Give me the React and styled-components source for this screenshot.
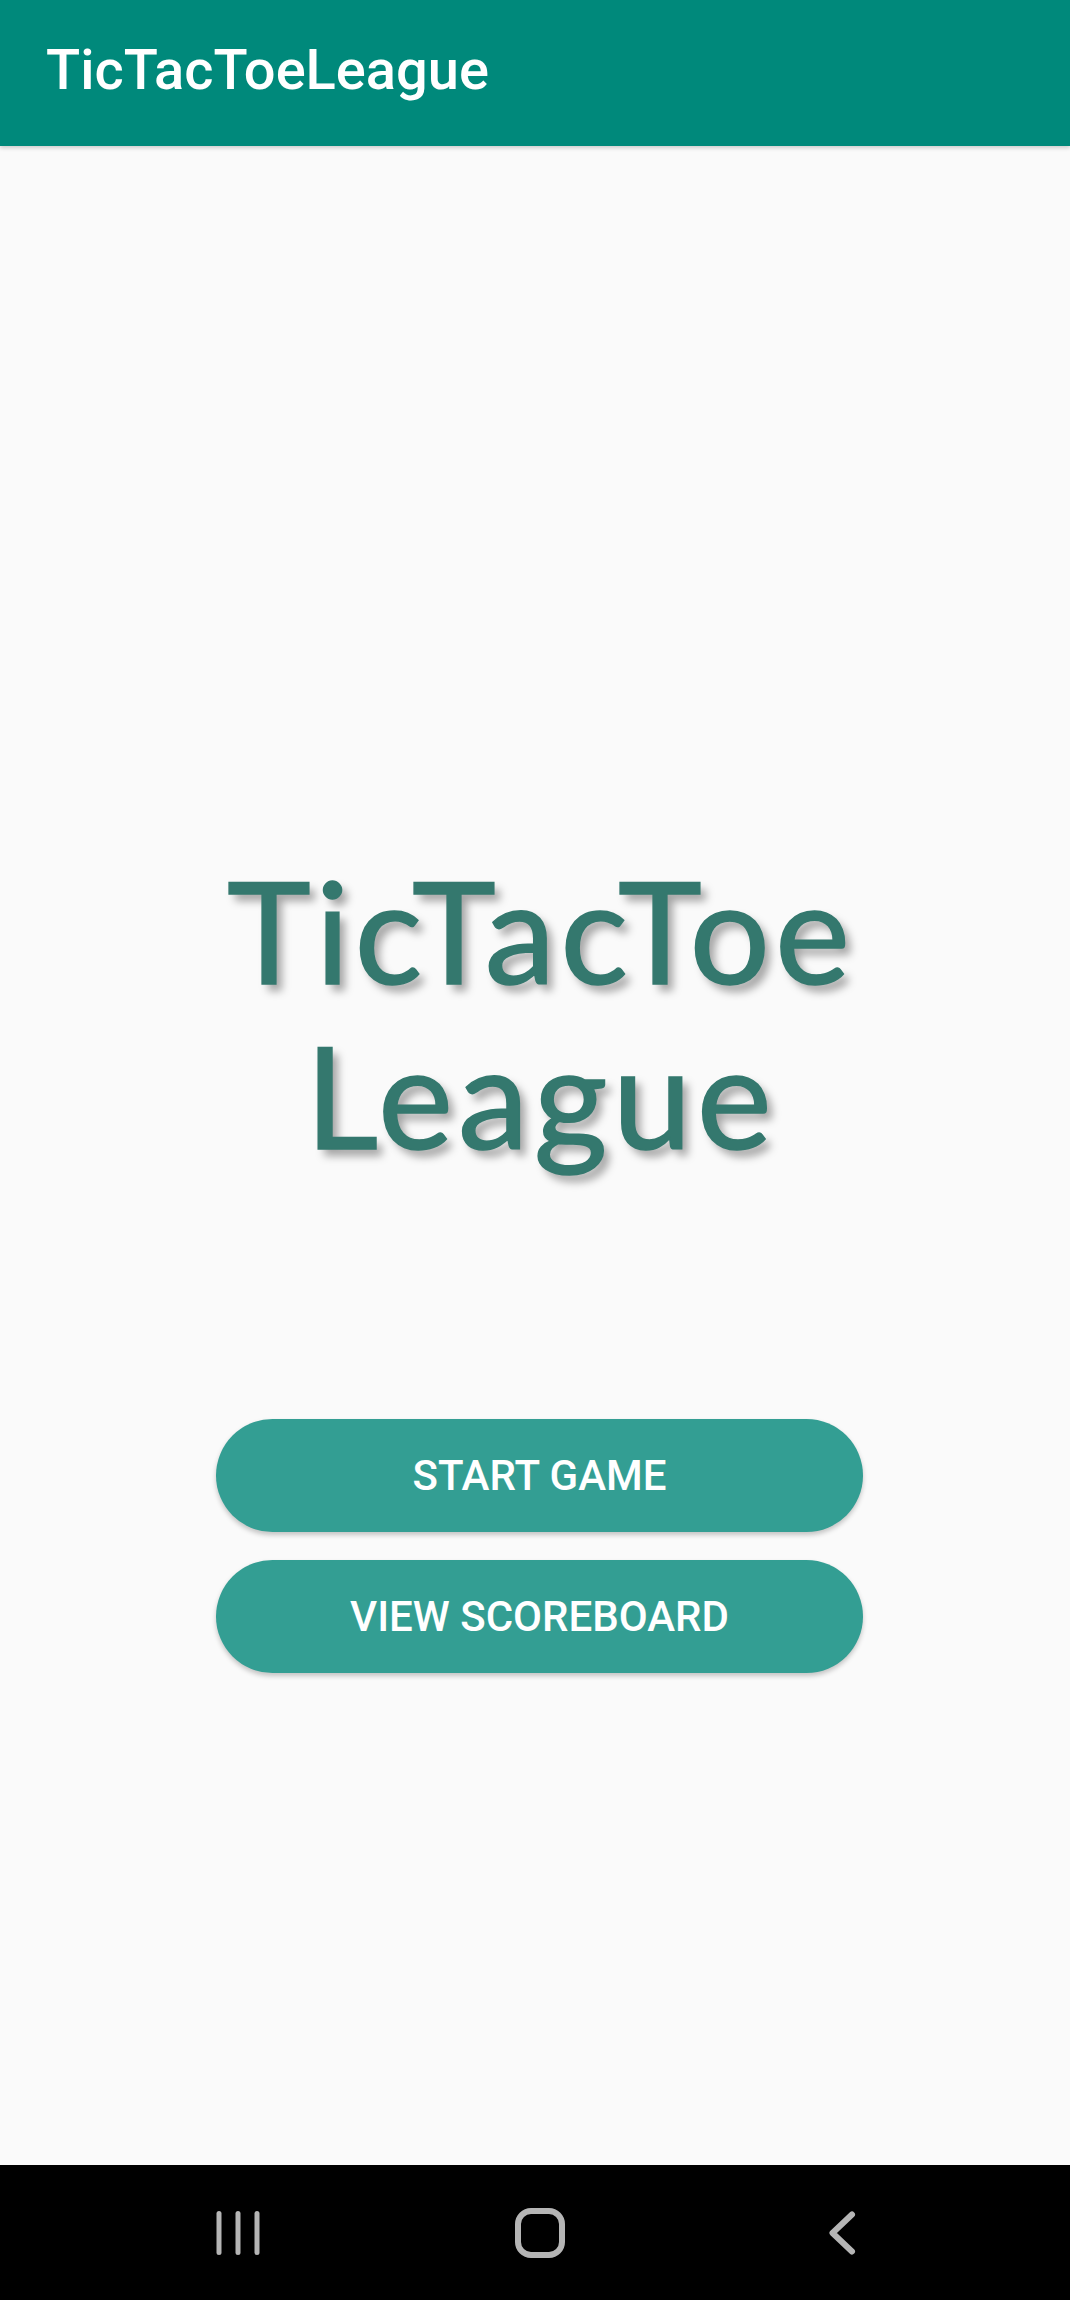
import React from "react";
import styled, { createGlobalStyle } from "styled-components";

const GlobalStyle = createGlobalStyle`
  html, body {
    margin: 0;
    padding: 0;
    background: #fafafa;
  }
  * { box-sizing: border-box; }
`;

const Screen = styled.div`
  width: 1070px;
  height: 2300px;
  display: flex;
  flex-direction: column;
  background: #fafafa;
  overflow: hidden;
`;

const AppBar = styled.header`
  height: 146px;
  flex: none;
  display: flex;
  align-items: center;
  padding: 0 0 6px 46px;
  background: #00897b;
  box-shadow: 0 2px 4px rgba(0, 0, 0, 0.18);
  position: relative;
  z-index: 1;
`;

const AppTitle = styled.h1`
  margin: 0;
  font-family: Roboto, "Liberation Sans", sans-serif;
  font-weight: 500;
  font-size: 56px;
  color: #ffffff;
`;

const Main = styled.main`
  flex: 1;
  display: flex;
  flex-direction: column;
  align-items: center;
  padding-top: 701px;
`;

const Title = styled.div`
  font-family: Lato, "Open Sans", sans-serif;
  font-weight: 400;
  font-size: 142px;
  line-height: 165px;
  letter-spacing: 5px;
  text-align: center;
  color: #34786e;
  -webkit-text-stroke: 1.5px #34786e;
  text-shadow: 6px 7px 8px rgba(0, 0, 0, 0.35);
  margin: 0 0 242px 12px;
`;

const Buttons = styled.div`
  display: flex;
  flex-direction: column;
  gap: 28px;
  margin-left: 9px;
`;

const PillButton = styled.button`
  width: 647px;
  height: 113px;
  border: none;
  border-radius: 57px;
  background: #339e93;
  color: #ffffff;
  font-family: Roboto, "Liberation Sans", sans-serif;
  font-weight: 500;
  font-size: 42px;
  letter-spacing: 0;
  text-transform: uppercase;
  box-shadow: 0 3px 5px rgba(0, 0, 0, 0.22);
  cursor: pointer;
`;

const NavBar = styled.nav`
  height: 135px;
  flex: none;
  background: #000000;
  display: flex;
  align-items: center;
  justify-content: center;
  padding-left: 10px;
`;

const NavSlot = styled.div`
  width: 302px;
  display: flex;
  justify-content: center;
  align-items: center;
`;

const iconColor = "#b5b5b5";

const RecentsIcon = () => (
  <svg width="50" height="50" viewBox="0 0 50 50">
    <g stroke={iconColor} strokeWidth="5" strokeLinecap="round">
      <line x1="6" y1="5.5" x2="6" y2="44.5" />
      <line x1="25" y1="5.5" x2="25" y2="44.5" />
      <line x1="44" y1="5.5" x2="44" y2="44.5" />
    </g>
  </svg>
);

const HomeIcon = () => (
  <svg width="50" height="50" viewBox="0 0 50 50">
    <rect x="3" y="3" width="44" height="44" rx="13" fill="none" stroke={iconColor} strokeWidth="6" />
  </svg>
);

const BackIcon = () => (
  <svg width="50" height="50" viewBox="0 0 50 50">
    <polyline
      points="35,6.5 15.5,25 35,43.5"
      fill="none"
      stroke={iconColor}
      strokeWidth="6"
      strokeLinecap="round"
      strokeLinejoin="round"
    />
  </svg>
);

export default function App() {
  return (
    <>
      <GlobalStyle />
      <Screen>
        <AppBar>
          <AppTitle>TicTacToeLeague</AppTitle>
        </AppBar>
        <Main>
          <Title>
            TicTacToe
            <br />
            League
          </Title>
          <Buttons>
            <PillButton>Start Game</PillButton>
            <PillButton>View Scoreboard</PillButton>
          </Buttons>
        </Main>
        <NavBar>
          <NavSlot>
            <RecentsIcon />
          </NavSlot>
          <NavSlot>
            <HomeIcon />
          </NavSlot>
          <NavSlot>
            <BackIcon />
          </NavSlot>
        </NavBar>
      </Screen>
    </>
  );
}
